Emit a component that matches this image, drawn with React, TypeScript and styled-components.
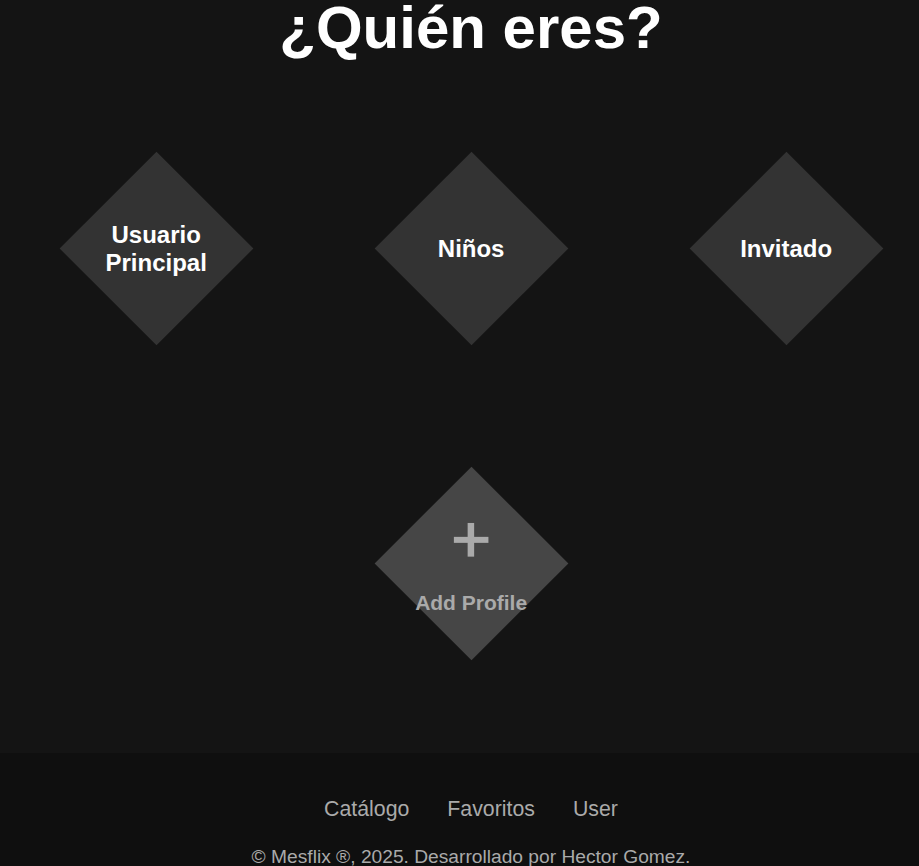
import React from "react";
import styled, { createGlobalStyle } from "styled-components";

const GlobalStyle = createGlobalStyle`
  html, body {
    margin: 0;
    padding: 0;
    background-color: #141414;
    overflow-x: hidden;
  }
  body {
    font-family: "Liberation Sans", Arial, sans-serif;
  }
`;

const Page = styled.div`
  width: 942px;
  min-height: 100vh;
  display: flex;
  flex-direction: column;
`;

const Main = styled.main`
  display: flex;
  flex-direction: column;
  align-items: center;
  padding-bottom: 93px;
`;

const Title = styled.h1`
  margin: -7px 0 0;
  font-size: 60px;
  font-weight: 700;
  color: #ffffff;
  line-height: normal;
`;

const ProfileGrid = styled.div`
  margin-top: 89px;
  display: grid;
  grid-template-columns: repeat(3, 194px);
  grid-auto-rows: 194px;
  gap: 121px;
  justify-content: center;
`;

const Cell = styled.div<{ $column?: number }>`
  display: flex;
  align-items: center;
  justify-content: center;
  grid-column: ${(p) => p.$column ?? "auto"};
`;

const Diamond = styled.button<{ $add?: boolean }>`
  width: 137px;
  height: 137px;
  border: none;
  padding: 0;
  transform: rotate(45deg);
  background-color: ${(p) => (p.$add ? "#464646" : "#333333")};
  display: flex;
  align-items: center;
  justify-content: center;
  cursor: pointer;
  font-family: inherit;
`;

const Label = styled.div<{ $add?: boolean }>`
  transform: rotate(-45deg);
  width: 137px;
  display: flex;
  flex-direction: column;
  align-items: center;
  text-align: center;
  color: ${(p) => (p.$add ? "#aaaaaa" : "#ffffff")};
  font-size: ${(p) => (p.$add ? "21px" : "24px")};
  font-weight: 700;
  line-height: ${(p) => (p.$add ? "24px" : "28px")};
  padding-top: ${(p) => (p.$add ? "10px" : "0")};
  white-space: ${(p) => (p.$add ? "nowrap" : "normal")};
`;

const Plus = styled.svg`
  display: block;
  margin-bottom: 34px;
`;

const Footer = styled.footer`
  margin-top: auto;
  background-color: #0f0f0f;
  padding: 44px 0 20px;
  display: flex;
  flex-direction: column;
  align-items: center;
  gap: 24px;
`;

const FooterNav = styled.nav`
  display: flex;
  gap: 38px;
`;

const FooterLink = styled.a`
  color: #aaaaaa;
  font-size: 21.3px;
  text-decoration: none;
  cursor: pointer;
`;

const Copyright = styled.p`
  margin: 0;
  color: #aaaaaa;
  font-size: 19.2px;
`;

const profiles = ["Usuario Principal", "Niños", "Invitado"];

const App = () => {
  return (
    <>
      <GlobalStyle />
      <Page>
        <Main>
          <Title>¿Quién eres?</Title>
          <ProfileGrid>
            {profiles.map((name) => (
              <Cell key={name}>
                <Diamond>
                  <Label>{name}</Label>
                </Diamond>
              </Cell>
            ))}
            <Cell $column={2}>
              <Diamond $add>
                <Label $add>
                  <Plus width="35" height="34" viewBox="0 0 35 34">
                    <rect x="0" y="14" width="35" height="6" fill="#aaaaaa" />
                    <rect x="14" y="0" width="6.5" height="34" fill="#aaaaaa" />
                  </Plus>
                  Add Profile
                </Label>
              </Diamond>
            </Cell>
          </ProfileGrid>
        </Main>
        <Footer>
          <FooterNav>
            <FooterLink>Catálogo</FooterLink>
            <FooterLink>Favoritos</FooterLink>
            <FooterLink>User</FooterLink>
          </FooterNav>
          <Copyright>© Mesflix ®, 2025. Desarrollado por Hector Gomez.</Copyright>
        </Footer>
      </Page>
    </>
  );
};

export default App;
